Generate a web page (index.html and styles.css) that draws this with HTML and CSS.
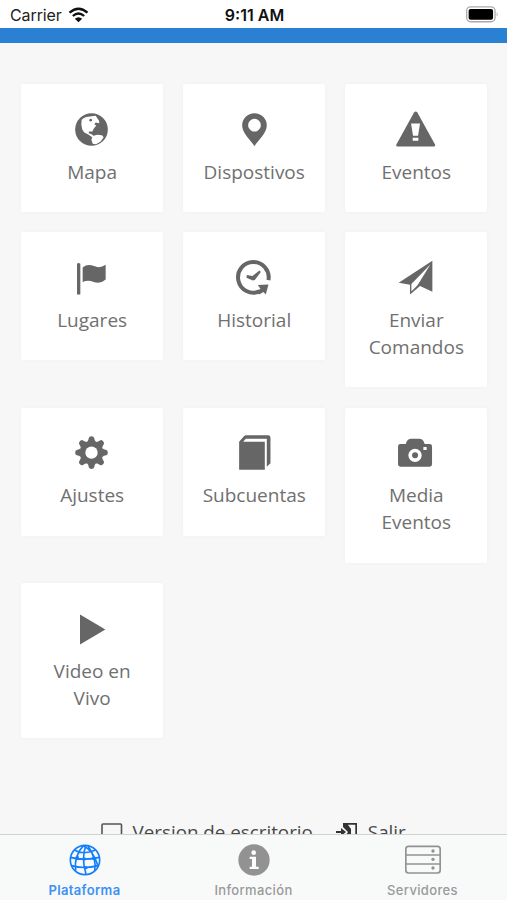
FILE: index.html
```html
<!DOCTYPE html>
<html lang="es">
<head>
<meta charset="utf-8">
<meta name="viewport" content="width=device-width, initial-scale=1">
<title>Plataforma</title>
<link rel="stylesheet" href="styles.css">
</head>
<body>
<div class="app">
  <header class="status">
    <div class="status-left">
      <span class="carrier">Carrier</span>
      <svg class="wifi" viewBox="0 0 60 48"><g fill="none" stroke="#111" stroke-width="7"><path d="M3 17Q30-7 57 17"/><path d="M13 27Q30 12 47 27"/></g><path d="M30 46L19 35Q30 26 41 35Z" fill="#111"/></svg>
    </div>
    <span class="time">9:11 AM</span>
    <svg class="battery" viewBox="0 0 100 50"><rect x="2" y="2" width="86" height="45" rx="12" fill="#fff" stroke="#aaa" stroke-width="4"/><rect x="8" y="8" width="74" height="33" rx="6" fill="#000"/><path d="M93 18Q99 24 93 31Z" fill="#aaa"/></svg>
  </header>
  <div class="bluebar"></div>
  <main class="content">
    <div class="grid">
      <a class="card">
        <svg class="icon" viewBox="186 100.5 120 120"><circle cx="244.500" cy="162" r="49"/><path class="cut" d="M215 133Q226 123 240 123L257 121L263 130L267 136L268 143L257 141L253 147L259 150L252 158L247 168L237 168L236 173L245 176L250 181L262 178L276 179L281 185L272 198L258 206L248 205L244 192L247 185L236 178L223 171L217 163L214 148Z"/><circle cx="242" cy="134" r="4"/></svg>
        <span>Mapa</span>
      </a>
      <a class="card">
        <svg class="icon" viewBox="-47.4 100.5 120 120"><path fill-rule="evenodd" d="M14 212C4 196-23 173-23 150A37 37 0 0 1 51 150C51 173 24 196 14 212ZM14 130a19 19 0 1 0 .1 0Z"/></svg>
        <span>Dispostivos</span>
      </a>
      <a class="card">
        <svg class="icon" viewBox="438.900 100.5 120 120"><path d="M493 111Q498 105 503 111L556 207Q558 213 552 213H444Q438 213 440 207Z"/><path class="cut" d="M484 144H511L505 181H490ZM489 187H506V196H489Z"/></svg>
        <span>Eventos</span>
      </a>
      <a class="card">
        <svg class="icon" viewBox="186 95.7 120 120"><path d="M201 116Q206 111 211 116V208H201ZM218 127Q232 115 252 123Q270 131 287 119V163Q271 178 251 171Q234 163 218 171Z"/></svg>
        <span>Lugares</span>
      </a>
      <a class="card">
        <svg class="icon" viewBox="-47.4 95.7 120 120"><path class="line" d="M56 165A46 46 0 1 0 29 199" stroke-width="12"/><path d="M24 180L56 178L48 208L41 201L28 208L20 199L32 191Z"/><path d="M-9 150L8 153L29 136L33 141L15 165L9 166L-10 158Z"/></svg>
        <span>Historial</span>
      </a>
      <a class="card">
        <svg class="icon" viewBox="438.900 95.7 120 120"><path d="M548 107V200L511 183L481 208V179L447 173Z"/><path class="cut" d="M542 118L504 180L485 199V177Z"/></svg>
        <span>Enviar Comandos</span>
      </a>
      <a class="card">
        <svg class="icon" viewBox="186 96.9 120 120"><g transform="translate(244.500 159)"><circle r="35"/><g id="teeth"><path id="tooth" d="M-13-32Q-9-37-8-44Q-7-49 0-49Q7-49 8-44Q9-37 13-32ZM-13 32Q-9 37-8 44Q-7 49 0 49Q7 49 8 44Q9 37 13 32Z"/><use href="#tooth" transform="rotate(45)"/></g><use href="#teeth" transform="rotate(90)"/><circle class="cut" r="18.500"/></g></svg>
        <span>Ajustes</span>
      </a>
      <a class="card">
        <svg class="icon" viewBox="-47.4 96.9 120 120"><path d="M-32 126L-17 109Q-15 107-11 107H55Q62 107 62 114V191L51 201V117H-12L-20 126H45V210H-32Z"/></svg>
        <span>Subcuentas</span>
      </a>
      <a class="card">
        <svg class="icon" viewBox="438.900 96.9 120 120"><path d="M445 140Q445 133 452 133H468Q472 117 485 117H508Q521 117 525 133H540Q547 133 547 140V194Q547 201 540 201H452Q445 201 445 194Z"/><circle class="cut" cx="496" cy="167" r="20"/><circle cx="496" cy="167" r="9"/><rect class="cut" x="521" y="142" width="10" height="9" rx="1"/></svg>
        <span>Media Eventos</span>
      </a>
      <a class="card">
        <svg class="icon" viewBox="186 99.3 120 120"><path d="M210 119L286 164L210 209Z"/></svg>
        <span>Video en Vivo</span>
      </a>
    </div>
    <div class="links">
      <a class="link"><svg class="desk" viewBox="0 0 22 20"><rect x="1" y="1" width="19.500" height="15" rx="1" fill="none" stroke="#555" stroke-width="1.600"/></svg>Version de escritorio</a>
      <a class="link"><svg class="exit" viewBox="0 0 22 20"><path d="M7 0H21V17H19.300V1.700H12L15 6V20L10 15V12L12 9L7 4ZM0 8H5V5L10 9L5 13V10H0Z" fill="#333"/></svg>Salir</a>
    </div>
  </main>
  <nav class="tabs">
    <a class="tab active">
      <svg viewBox="0 0 108 96"><g fill="none" stroke="#147efb" stroke-width="5"><circle cx="54" cy="48" r="44"/><path d="M50 4Q20 35 26 80M57 4Q42 40 57 91M62 4Q90 45 83 80M48 5Q80 18 93 66M22 18Q48 34 84 19M11 40Q48 51 97 40M13 65Q50 76 94 65"/></g><g fill="#147efb"><circle cx="31" cy="40" r="5"/><circle cx="52" cy="45" r="5"/><circle cx="57" cy="71" r="5"/><circle cx="79" cy="43" r="5"/></g></svg>
      <span>Plataforma</span>
    </a>
    <a class="tab">
      <svg viewBox="0 0 108 96"><circle cx="54" cy="48" r="47" fill="#929292"/><circle cx="53" cy="26" r="7" fill="#fff"/><path d="M41 38H60V68H68V75H41V68H48V45H41Z" fill="#fff"/></svg>
      <span>Información</span>
    </a>
    <a class="tab">
      <svg viewBox="0 0 108 96"><g fill="none" stroke="#929292" stroke-width="5"><rect x="2.500" y="7" width="103" height="80" rx="8"/><path d="M3 33H105M3 60H105"/></g><g fill="#929292"><circle cx="84" cy="21" r="5"/><circle cx="84" cy="46" r="5"/><circle cx="84" cy="72" r="5"/></g></svg>
      <span>Servidores</span>
    </a>
  </nav>
</div>
</body>
</html>
```
FILE: styles.css
```css
* { box-sizing: border-box; }
body { margin: 0; }
.app {
  display: flex;
  flex-direction: column;
  height: 900px;
  overflow: hidden;
  background: #f7f7f7;
}
.status {
  display: grid;
  grid-template-columns: 1fr auto 1fr;
  align-items: center;
  height: 28px;
  padding: 1px 8px 0 10px;
  background: #fff;
  color: #222;
  font: 16px/26px Inter, sans-serif;
}
.status-left { display: flex; align-items: center; gap: 6px; }
.carrier { letter-spacing: -0.1px; }
.wifi { width: 21px; height: 16px; }
.time { font-weight: 600; color: #111; }
.battery { justify-self: end; width: 33px; height: 17px; margin-top: -1px; }
.bluebar { height: 15px; flex: none; background: #2a80d3; }
.content { flex: 1; min-height: 0; overflow: hidden; padding: 41px 20px 0 21.3px; }
.grid {
  display: grid;
  grid-template-columns: repeat(3, 141.7px);
  gap: 20.4px;
  align-items: start;
}
.card {
  display: flex;
  flex-direction: column;
  align-items: center;
  padding: 24.500px 16px 26.500px;
  background: #fff;
  border-radius: 2px;
  box-shadow: 0 0 5px rgba(0, 0, 0, 0.03);
  color: #707070;
  font: 19px/27px "Open Sans", sans-serif;
  text-align: center;
}
.icon { width: 40px; height: 40px; margin-bottom: 10px; fill: #666; }
.cut { fill: #fff; }
.line { fill: none; stroke: #666; }
.links {
  display: flex;
  justify-content: center;
  gap: 23px;
  margin: 81px 1px 0 -1px;
  color: #484848;
  font: 18.800px/27px "Open Sans", sans-serif;
}
.link { display: flex; align-items: center; gap: 10px; white-space: nowrap; }
.desk, .exit { width: 22px; height: 20px; }
.tabs {
  display: flex;
  flex: none;
  height: 66px;
  border-top: 1px solid #d2d2d2;
  background: #f8f9f9;
}
.tab {
  flex: 1;
  display: flex;
  flex-direction: column;
  align-items: center;
  padding-top: 9px;
  color: #9a9a9a;
  font: 500 13px/16px Inter, sans-serif;
  letter-spacing: 0.35px;
}
.tab svg { width: 36px; height: 32px; margin-bottom: 6px; }
.active { color: #3c91f5; font-weight: 600; }
```
